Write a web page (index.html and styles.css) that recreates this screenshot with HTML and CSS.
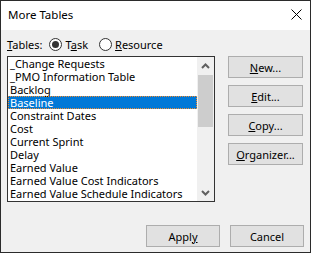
FILE: index.html
```html
<!DOCTYPE html>
<html lang="en">
<head>
    <meta charset="UTF-8">
    <title>More Tables</title>
    <link rel="stylesheet" href="styles.css">
</head>
<body>
    <div class="dialog">
        <div class="title-bar">
            <span class="title">More Tables</span>
            <svg class="close" width="11" height="11" viewBox="0 0 11 11">
                <path d="M0.5 0.5 L10.5 10.5 M10.5 0.5 L0.5 10.5" stroke="#000" stroke-width="1" fill="none"/>
            </svg>
        </div>

        <div class="dialog-body">
            <div class="tables-row">
                <span class="label"><u>T</u>ables:</span>
                <label class="option">
                    <span class="radio checked"></span>
                    <span>T<u>a</u>sk</span>
                </label>
                <label class="option">
                    <span class="radio"></span>
                    <span><u>R</u>esource</span>
                </label>
            </div>

            <div class="main">
                <div class="listbox">
                    <ul class="items">
                        <li>_Change Requests</li>
                        <li>_PMO Information Table</li>
                        <li>Backlog</li>
                        <li class="selected">Baseline</li>
                        <li>Constraint Dates</li>
                        <li>Cost</li>
                        <li>Current Sprint</li>
                        <li>Delay</li>
                        <li>Earned Value</li>
                        <li>Earned Value Cost Indicators</li>
                        <li>Earned Value Schedule Indicators</li>
                    </ul>
                    <div class="scrollbar">
                        <div class="arrow">
                            <svg width="9" height="6" viewBox="0 0 9 6">
                                <polyline points="1,5 4.5,1.5 8,5" stroke="#606060" stroke-width="2" fill="none"/>
                            </svg>
                        </div>
                        <div class="track">
                            <div class="thumb"></div>
                        </div>
                        <div class="arrow">
                            <svg width="9" height="6" viewBox="0 0 9 6">
                                <polyline points="1,1 4.5,4.5 8,1" stroke="#606060" stroke-width="2" fill="none"/>
                            </svg>
                        </div>
                    </div>
                </div>

                <div class="side-buttons">
                    <button><u>N</u>ew...</button>
                    <button><u>E</u>dit...</button>
                    <button><u>C</u>opy...</button>
                    <button><u>O</u>rganizer...</button>
                </div>
            </div>

            <div class="footer">
                <button>Appl<u>y</u></button>
                <button>Cancel</button>
            </div>
        </div>
    </div>
</body>
</html>
```

FILE: styles.css
```css
* {
    margin: 0;
    padding: 0;
    box-sizing: border-box;
    font-family: 'Noto Sans', 'Open Sans', sans-serif;
}

body {
    background-color: #f0f0f0;
}

.dialog {
    width: 311px;
    height: 253px;
    border: 1px solid #2b2b2b;
    display: flex;
    flex-direction: column;
    background-color: #f0f0f0;
}

.title-bar {
    height: 29px;
    background-color: #fff;
    display: flex;
    align-items: center;
    justify-content: space-between;
    padding: 0 8px 2px 7px;
}

.title {
    font-size: 11.5px;
    color: #000;
}

.close {
    display: block;
}

.dialog-body {
    flex: 1;
    padding: 0 6px;
    display: flex;
    flex-direction: column;
}

.tables-row {
    height: 26px;
    padding-top: 2px;
    display: flex;
    align-items: center;
    font-size: 11px;
    color: #000;
}

.label {
    margin-right: 7px;
}

.option {
    display: flex;
    align-items: center;
    gap: 3px;
    margin-right: 11px;
}

.radio {
    width: 13px;
    height: 13px;
    border: 1px solid #333;
    border-radius: 50%;
    background-color: #fff;
    display: flex;
    align-items: center;
    justify-content: center;
}

.radio.checked::after {
    content: '';
    width: 7px;
    height: 7px;
    border-radius: 50%;
    background-color: #333;
}

.main {
    display: flex;
    gap: 13px;
}

.listbox {
    width: 208px;
    height: 146px;
    border: 1px solid #333;
    background-color: #fff;
    display: flex;
}

.items {
    flex: 1;
    list-style: none;
    font-size: 11px;
    color: #000;
}

.items li {
    height: 13px;
    line-height: 13px;
    padding-left: 2px;
    white-space: nowrap;
}

.items li.selected {
    background-color: #0078d7;
    color: #fff;
    outline: 1px dotted #f08c30;
    outline-offset: -1px;
}

.scrollbar {
    width: 17px;
    display: flex;
    flex-direction: column;
    background-color: #f0f0f0;
}

.arrow {
    height: 17px;
    display: flex;
    align-items: center;
    justify-content: center;
}

.track {
    flex: 1;
    padding: 1px;
}

.thumb {
    height: 52px;
    background-color: #cdcdcd;
}

.side-buttons {
    display: flex;
    flex-direction: column;
    gap: 7px;
}

button {
    width: 75px;
    height: 22px;
    border: 1px solid #adadad;
    background-color: #e1e1e1;
    font-size: 11px;
    color: #000;
}

.footer {
    margin-top: 23px;
    display: flex;
    justify-content: flex-end;
    gap: 10px;
}

.footer button {
    width: 74px;
}
```
